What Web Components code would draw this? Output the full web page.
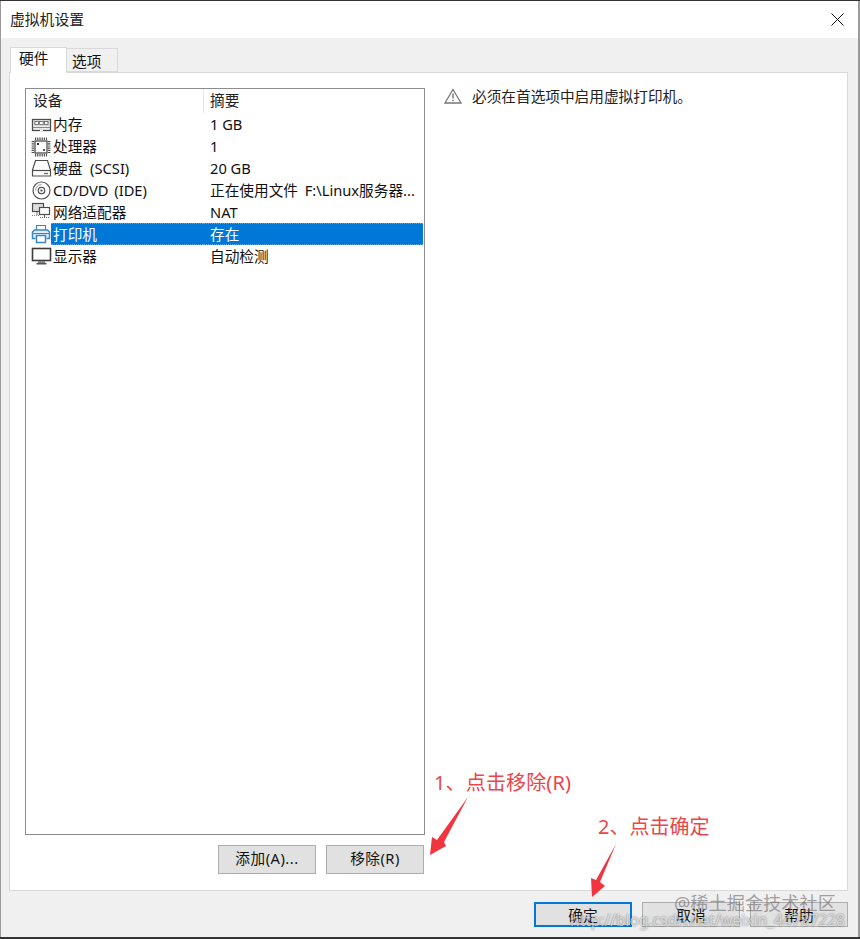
<!DOCTYPE html>
<html lang="zh"><head><meta charset="utf-8"><title>虚拟机设置</title>
<style>
html,body{margin:0;height:939px;overflow:hidden}
body{position:relative;font:14.67px/22px "Noto Sans","Noto Sans CJK SC",sans-serif;color:#111;
background:linear-gradient(#333 0 1px,transparent 1px calc(100% - 2px),#333 0),#9a9a9a}
</style></head><body>
<vm-dialog heading="虚拟机设置">
  <vm-tab slot="tabs" active>硬件</vm-tab>
  <vm-tab slot="tabs">选项</vm-tab>
  <device-list slot="list">
    <device-row icon="mem" summary="1 GB">内存</device-row>
    <device-row icon="cpu" summary="1">处理器</device-row>
    <device-row icon="hdd" summary="20 GB" style="--nw:4px">硬盘 (SCSI)</device-row>
    <device-row icon="cd" summary="正在使用文件 F:\Linux服务器..." style="--nw:2px;--sw:3px">CD/DVD (IDE)</device-row>
    <device-row icon="net" summary="NAT">网络适配器</device-row>
    <device-row icon="print" summary="存在" selected>打印机</device-row>
    <device-row icon="mon" summary="自动检测">显示器</device-row>
  </device-list>
  <dlg-button slot="actions">添加(A)...</dlg-button>
  <dlg-button slot="actions">移除(R)</dlg-button>
  <warn-note slot="note">必须在首选项中启用虚拟打印机。</warn-note>
  <dlg-button slot="footer" primary>确定</dlg-button>
  <dlg-button slot="footer">取消</dlg-button>
  <dlg-button slot="footer">帮助</dlg-button>
</vm-dialog>
<photo-overlay></photo-overlay>
<script>
const def=(name,html)=>{
  customElements.define(name,class extends HTMLElement{
    connectedCallback(){
      if(this.shadowRoot)return;
      const r=this.attachShadow({mode:'open'});
      r.innerHTML=typeof html==='function'?html(this):html;
    }
  });
};
def('vm-dialog',el=>`<style>
:host{display:flex;flex-direction:column;margin:1px 2px 0 1px;height:936px;background:#f0f0f0}
.title{height:37px;background:#fff;display:flex;align-items:center;justify-content:space-between;padding:0 14px 2px 9px;box-sizing:border-box;font-size:14.8px;color:#222}
.title svg{display:block;margin-top:1px}
.tabs{display:flex;align-items:flex-end;padding:9px 0 0 9px;height:25px;position:relative;z-index:1}
.panel{flex:1;min-height:0;margin:0 10px 0 8px;background:#fff;border:1px solid #d9d9d9;display:grid;grid-template-columns:400px 1fr;padding:15px 0 16px 15px;box-sizing:border-box}
.left{display:flex;flex-direction:column;min-height:0}
.left ::slotted(device-list){flex:1;min-height:0}
.actions{display:flex;justify-content:flex-end;gap:10px;margin:10px 1px 0 0}
.note{padding:0 0 0 19px}
.footer{height:46px;box-sizing:border-box;display:flex;justify-content:flex-end;gap:10px;padding:11px 10px 0 0}
</style>
<div class="title"><span>${el.getAttribute('heading')}</span>
<svg width="13" height="13" viewBox="0 0 13 13"><path d="M.5.5l12 12M12.5.5l-12 12" stroke="#111" fill="none"/></svg></div>
<div class="tabs"><slot name="tabs"></slot></div>
<div class="panel"><div class="left"><slot name="list"></slot><div class="actions"><slot name="actions"></slot></div></div>
<div class="note"><slot name="note"></slot></div></div>
<div class="footer"><slot name="footer"></slot></div>`);
def('vm-tab',el=>{const a=el.hasAttribute('active');return `<style>
:host{display:block;box-sizing:border-box;color:#111;background:${a?'#fff':'#f0f0f0'};
border:1px solid #d9d9d9;${a?'border-bottom:0;margin-bottom:-1px;':'border-left:0;'}
width:${a?57:51}px;height:${a?26:24}px;padding-left:${a?8:5}px;
line-height:${a?21:24}px}
</style><slot></slot>`});
def('device-list',`<style>
:host{display:block;box-sizing:border-box;border:1px solid #8c8c8c;background:#fff;overflow:hidden}
.head{display:grid;grid-template-columns:177px 1fr;height:24px;line-height:23px;color:#222}
.head span{padding-left:7px}
.head span+span{border-left:1px solid #e5e5e5;padding-left:6px}
</style><div class="head"><span>设备</span><span>摘要</span></div><slot></slot>`);
const icons={
mem:`<rect x="3.500" y="6.500" width="18" height="11" fill="#eee" stroke="#4c4c4c" stroke-width="1.300"/><rect x="5" y="8" width="15" height="4.500" fill="#bdbdbd"/><rect x="6" y="8.500" width="3.500" height="3" fill="#fff" stroke="#555" stroke-width=".7"/><rect x="10.700" y="8.500" width="3.500" height="3" fill="#fff" stroke="#555" stroke-width=".7"/><rect x="15.400" y="8.500" width="3.500" height="3" fill="#fff" stroke="#555" stroke-width=".7"/><path d="M4 14.500h17" stroke="#888"/><path d="M11 17.500h3" stroke="#fff"/>`,
cpu:`<rect x="6" y="6" width="12" height="12" fill="#fff" stroke="#4c4c4c" stroke-width="1.300"/><path d="M6 3.800h12M6 20.200h12M3.800 6v12M20.200 6v12" stroke="#4c4c4c" stroke-width="2.400" stroke-dasharray="1.200 1" fill="none"/><rect x="8" y="8" width="2" height="2" fill="#333"/><rect x="14" y="14" width="2" height="2" fill="#555"/>`,
hdd:`<path d="M6.500 3.500h12l3 9.500v6h-18v-6z" fill="#fff" stroke="#4c4c4c" stroke-width="1.200"/><path d="M3.500 13.500h18" stroke="#4c4c4c" stroke-width="1.200"/><path d="M15 16.500h4" stroke="#666" stroke-width="1.300"/>`,
cd:`<circle cx="12.500" cy="11.500" r="8.500" fill="#fff" stroke="#555" stroke-width="1.200"/><circle cx="12.500" cy="11.500" r="3.300" fill="#eee" stroke="#444" stroke-width="1.100"/><circle cx="12.500" cy="11.500" r="1.100" fill="#555"/><path d="M6.500 11.500a6 6 0 0 1 6-6" stroke="#999" fill="none"/>`,
net:`<rect x="3.500" y="2.500" width="11" height="8" fill="#ddd" stroke="#4c4c4c" stroke-width="1.200"/><path d="M8 11v3" stroke="#777"/><path d="M3 14.500h8" stroke="#888" stroke-dasharray="1 1"/><rect x="10.500" y="6.500" width="10" height="7" fill="#fff" stroke="#4c4c4c" stroke-width="1.200"/><path d="M15.500 14v2" stroke="#555"/><path d="M11 16.500h10" stroke="#666" stroke-dasharray="1 1"/>`,
print:`<path d="M7.500 7.500v-5h9v5" fill="#fff" stroke="#3d86c6" stroke-width="1.200"/><path d="M6.500 15.500h-3v-6.500l2-2h13l2 2v6.500h-3" fill="#dcebf7" stroke="#3d86c6" stroke-width="1.500"/><rect x="7.500" y="12.500" width="9" height="7" fill="#fff" stroke="#3d86c6" stroke-width="1.500"/><path d="M3.500 10.500h17" stroke="#3d86c6"/>`,
mon:`<rect x="3.500" y="3.500" width="18" height="12" fill="#fff" stroke="#3c3c3c" stroke-width="1.600"/><path d="M9 16h7v2H9z" fill="#888"/><path d="M7.500 18.700h10" stroke="#555" stroke-width="1.600"/>`};
def('device-row',el=>{const s=el.hasAttribute('selected');const sel=s?'background:#0078d7;color:#fff;border:solid rgba(255,255,255,.35);border-width:1px 0;border-style:dotted none;line-height:20px;':'';return `<style>
:host{display:grid;grid-template-columns:25px 152px 1fr;height:22px;line-height:22px;margin-right:1px;white-space:nowrap}
svg{display:block;margin-left:3px}
.t{padding-left:2px;word-spacing:var(--nw,0);${sel}}
.s{padding-left:7px;overflow:hidden;word-spacing:var(--sw,0);${sel}}
</style><svg width="22" height="22" viewBox="0 0 22 22" style="overflow:visible">${icons[el.getAttribute('icon')]}</svg>
<div class="t"><slot></slot></div><div class="s">${el.getAttribute('summary')}</div>`});
def('dlg-button',el=>{const p=el.hasAttribute('primary');return `<style>
:host{display:block;box-sizing:border-box;width:98px;height:25px;background:#e1e1e1;border:${p?'2px solid #0078d7':'1px solid #adadad'};text-align:center;line-height:${p?22:24}px;color:#111}
:host([slot=actions]){height:29px;line-height:25px;letter-spacing:.5px}
</style><slot></slot>`});
def('warn-note',`<style>
:host{display:flex;align-items:flex-start;gap:10px;line-height:16px;color:#222}
svg{flex:none}
</style><svg width="18" height="16" viewBox="0 0 18 16"><path d="M9 1.500L17 15H1z" fill="#fff" stroke="#777" stroke-width="1.300"/><path d="M9 5.500v5M9 11.800v1.500" stroke="#777" stroke-width="1.400"/></svg><span><slot></slot></span>`);
def('photo-overlay',`<style>
:host{position:absolute;inset:0;pointer-events:none;display:block}
.a{position:absolute;font-size:20px;line-height:26px;color:#e8474c;white-space:nowrap}
.w{position:absolute;white-space:nowrap}
.j{left:674px;top:891px;font-size:18.200px;line-height:24px;color:rgba(105,105,105,.6)}
.c{left:570px;top:910px;font-size:15.500px;line-height:20px;color:rgba(255,255,255,.6);text-shadow:0 0 2px rgba(70,70,70,.75)}
svg{position:absolute;left:0;top:0}
</style>
<svg width="860" height="939" viewBox="0 0 860 939"><path d="M468 797L444 842 446 846 430 855 432 837 437 840z" fill="#f0353f"/><path d="M616 844L600 882 605 886 592 897 591 878 596 880z" fill="#f0353f"/></svg>
<div class="a" style="left:434px;top:770px;letter-spacing:.15px">1、点击移除(R)</div>
<div class="a" style="left:598px;top:814px">2、点击确定</div>
<div class="w j">@稀土掘金技术社区</div>
<div class="w c">http://blog.csdn.net/weixin_44787228</div>`);
</script>
</body></html>
